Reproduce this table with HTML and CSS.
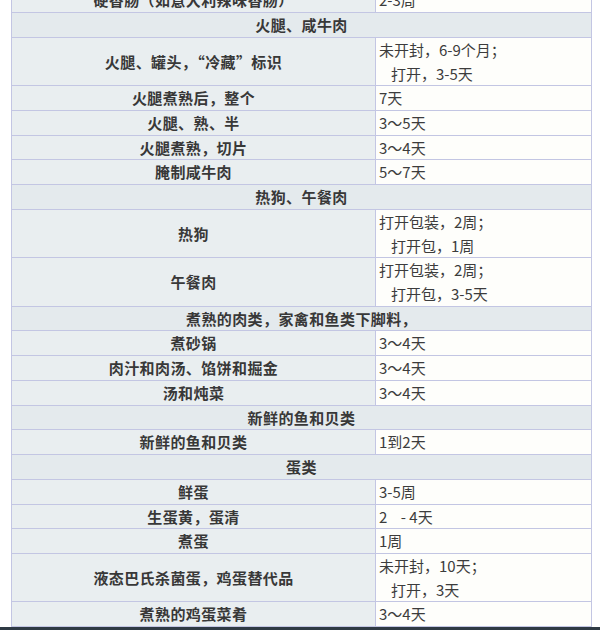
FILE: index.html
```html
<!DOCTYPE html>
<html lang="zh-CN">
<head>
<meta charset="utf-8">
<title>食品冷藏时间表</title>
<link rel="stylesheet" href="styles.css">
</head>
<body>
<div class="page">
<table class="chart">
<colgroup><col class="c-name"><col class="c-time"></colgroup>
<tbody>
<tr><td class="name">硬香肠（如意大利辣味香肠）</td><td class="time">2-3周</td></tr>
<tr><td class="group" colspan="2">火腿、咸牛肉</td></tr>
<tr><td class="name">火腿、罐头，“冷藏”标识</td><td class="time">未开封，6-9个月；<br><span class="indent">打开，3-5天</span></td></tr>
<tr><td class="name">火腿煮熟后，整个</td><td class="time">7天</td></tr>
<tr><td class="name">火腿、熟、半</td><td class="time">3～5天</td></tr>
<tr><td class="name">火腿煮熟，切片</td><td class="time">3～4天</td></tr>
<tr><td class="name">腌制咸牛肉</td><td class="time">5～7天</td></tr>
<tr><td class="group" colspan="2">热狗、午餐肉</td></tr>
<tr><td class="name">热狗</td><td class="time">打开包装，2周；<br><span class="indent">打开包，1周</span></td></tr>
<tr><td class="name">午餐肉</td><td class="time">打开包装，2周；<br><span class="indent">打开包，3-5天</span></td></tr>
<tr><td class="group" colspan="2">煮熟的肉类，家禽和鱼类下脚料，</td></tr>
<tr><td class="name">煮砂锅</td><td class="time">3～4天</td></tr>
<tr><td class="name">肉汁和肉汤、馅饼和掘金</td><td class="time">3～4天</td></tr>
<tr><td class="name">汤和炖菜</td><td class="time">3～4天</td></tr>
<tr><td class="group" colspan="2">新鲜的鱼和贝类</td></tr>
<tr><td class="name">新鲜的鱼和贝类</td><td class="time">1到2天</td></tr>
<tr><td class="group" colspan="2">蛋类</td></tr>
<tr><td class="name">鲜蛋</td><td class="time">3-5周</td></tr>
<tr><td class="name">生蛋黄，蛋清</td><td class="time">2&nbsp;&nbsp;&nbsp;&nbsp;-&nbsp;4天</td></tr>
<tr><td class="name">煮蛋</td><td class="time">1周</td></tr>
<tr><td class="name">液态巴氏杀菌蛋，鸡蛋替代品</td><td class="time">未开封，10天；<br><span class="indent">打开，3天</span></td></tr>
<tr><td class="name">煮熟的鸡蛋菜肴</td><td class="time">3～4天</td></tr>
</tbody>
</table>
<div class="taskbar"></div>
</div>
</body>
</html>
```
FILE: styles.css
```css
html, body {
  margin: 0;
  padding: 0;
  background: #ffffff;
  overflow: hidden;
}
.page {
  width: 600px;
  height: 630px;
  overflow: hidden;
  padding-left: 11px;
  box-sizing: border-box;
}
.chart {
  border-collapse: collapse;
  width: 580px;
  margin-top: -12.6px;
  font-family: "Noto Sans CJK SC", "Noto Sans", sans-serif;
  font-size: 15px;
  line-height: 23.72px;
  color: #333333;
  table-layout: fixed;
}
.c-name { width: 364px; }
.c-time { width: 216px; }
.chart td {
  border: 1px solid #c3c6e3;
  padding: 0;
  vertical-align: middle;
}
.name {
  background: #e9eef0;
  font-weight: bold;
  text-align: center;
  letter-spacing: 0.4px;
  color: #383838;
}
.group {
  background: #e4eaed;
  font-weight: bold;
  text-align: center;
  letter-spacing: 0.4px;
  color: #383838;
}
.time {
  background: #fefefb;
  text-align: left;
  padding-left: 3px !important;
  font-weight: normal;
  color: #3c3c3c;
}
.indent {
  padding-left: 12px;
}
.taskbar {
  height: 10px;
  margin-left: -11px;
  width: 600px;
  background: #2f3a44;
}
```
